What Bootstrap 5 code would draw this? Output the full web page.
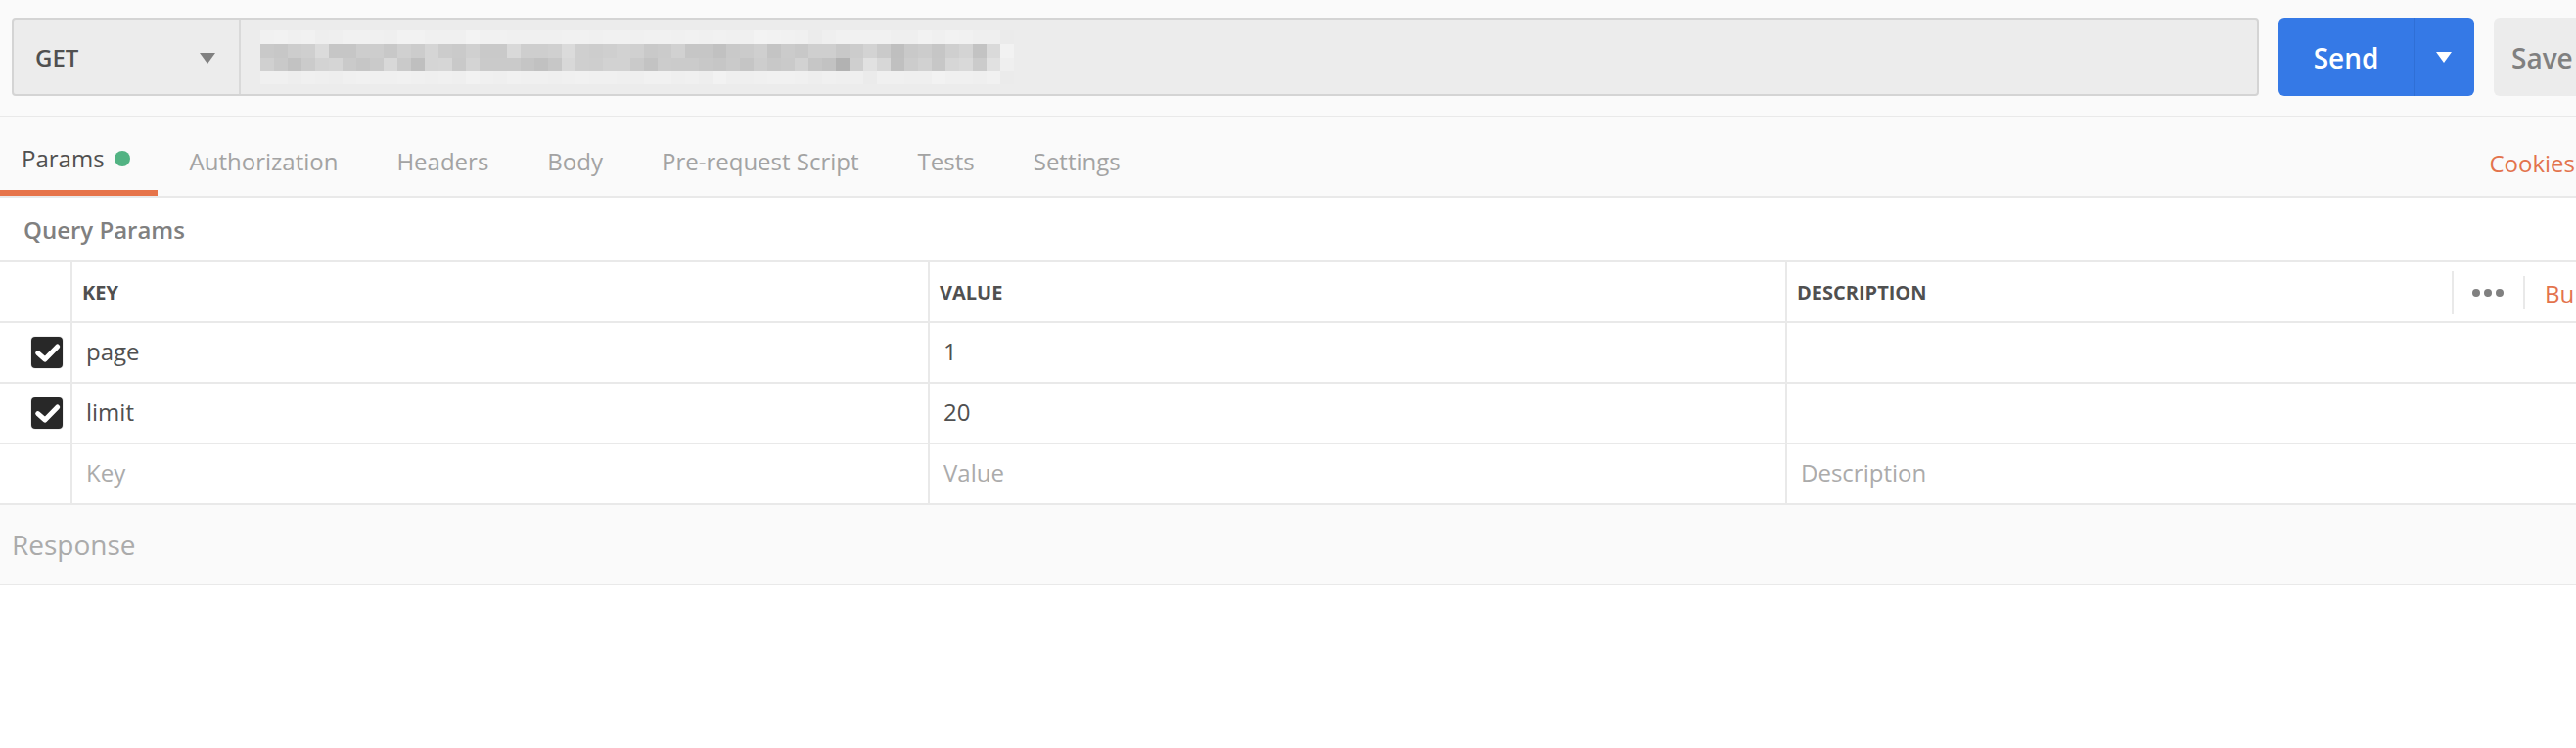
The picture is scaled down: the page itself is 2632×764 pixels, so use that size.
<!DOCTYPE html>
<html lang="en">
<head>
<meta charset="utf-8">
<title>Request</title>
<link href="https://cdn.jsdelivr.net/npm/bootstrap@5.3.0/dist/css/bootstrap.min.css" rel="stylesheet">
<style>
html,body{background:#fff;overflow:hidden;}
body{font-family:"Open Sans","Liberation Sans",sans-serif;font-size:24px;color:#505050;width:2632px;height:764px;}
.topbar{background:#fafafa;border-bottom:2px solid #e9e9e9;padding:18px 0 20px 12px;gap:20px;height:120px;}
.urlgroup{width:2296px;height:80px;background:#ececec;border:2px solid #d4d4d4;border-radius:4px;flex:none;}
.methodbox{width:232px;border-right:2px solid #d9d9d9;padding:2px 24px 0 22px;font-weight:600;font-size:24px;color:#505050;}
.caret-d{width:16px;height:11px;flex:none;}
.urlfield{padding-left:20px;}
.sendgroup{width:200px;height:80px;background:#3579e6;border-radius:6px;flex:none;color:#fff;}
.sendmain{width:140px;border-right:2px solid #2f6fd6;font-size:28px;font-weight:600;padding-top:2px;}
.sendarrow{width:60px;padding-right:2px;}
.savebtn{width:130px;height:80px;background:#ececec;border-radius:6px;flex:none;color:#808080;font-size:28px;font-weight:600;padding:2px 0 0 18px;}
.tabrow{background:#fafafa;height:82px;border-bottom:2px solid #e9e9e9;}
.tabitem{height:80px;padding:10px 30px 0;color:#a3a3a3;font-size:24px;line-height:1;flex:none;}
.tabitem.sel{color:#505050;padding:10px 28px 0 22px;margin-right:3px;border-bottom:6px solid #e6744a;}
.stat-dot{width:16px;height:16px;border-radius:50%;background:#52b383;margin-left:10px;}
.cookieslink{color:#e3734c;font-size:24px;padding-right:1px;padding-top:14px;}
.qptitle{height:64px;padding:1px 0 0 24px;font-size:24px;font-weight:600;color:#808080;}
.paramgrid{width:100%;table-layout:fixed;border-collapse:separate;border-spacing:0;border-top:2px solid #e9e9e9;}
.paramgrid td,.paramgrid th{height:62px;border-bottom:2px solid #e9e9e9;border-right:2px solid #e9e9e9;padding:0 14px 3px;font-size:24px;font-weight:400;color:#505050;vertical-align:middle;white-space:nowrap;overflow:hidden;}
.paramgrid th{font-size:20px;font-weight:700;padding:2px 0 0 10px;color:#505050;}
.paramgrid td:last-child,.paramgrid th:last-child{border-right:0;}
.paramgrid td.chkcell{padding:0 8px 0 0;}
.ghost{color:#ababab!important;}
.chkbox{display:block;width:32px;height:32px;margin-left:auto;background:#282828;border-radius:4px;box-shadow:0 0 0 1px #efefef;}
.chkbox svg{display:block;}
.desc-title{width:669px;flex:none;}
.vsep-a{width:2px;height:44px;background:#e9e9e9;flex:none;}
.vsep-b{width:2px;height:34px;background:#e9e9e9;flex:none;margin-left:20px;}
.moredots{gap:4px;margin-left:19px;flex:none;}
.moredots i{display:block;width:8px;height:8px;border-radius:50%;background:#808080;}
.bulklink{color:#e3734c;font-size:24px;font-weight:400;margin-left:20px;padding-top:2px;flex:none;}
.respbar{height:82px;background:#fafafa;border-bottom:2px solid #e9e9e9;padding-left:12px;font-size:28px;color:#ababab;}
</style>
</head>
<body>
<div class="topbar d-flex align-items-start">
  <div class="urlgroup d-flex">
    <div class="methodbox d-flex align-items-center justify-content-between">
      <span>GET</span>
      <svg class="caret-d" viewBox="0 0 16 11"><path d="M0 0H16L8 11Z" fill="#808080"/></svg>
    </div>
    <div class="urlfield d-flex align-items-center"><svg id="mosaic" width="770" height="55" viewBox="0 0 770 55" shape-rendering="crispEdges"></svg></div>
  </div>
  <div class="sendgroup d-flex">
    <div class="sendmain d-flex align-items-center justify-content-center">Send</div>
    <div class="sendarrow d-flex align-items-center justify-content-center"><svg class="caret-d" viewBox="0 0 16 11"><path d="M0 0H16L8 11Z" fill="#fff"/></svg></div>
  </div>
  <div class="savebtn d-flex align-items-center">Save</div>
</div>

<div class="tabrow d-flex">
  <div class="tabitem sel d-flex align-items-center">Params<span class="stat-dot"></span></div>
  <div class="tabitem d-flex align-items-center">Authorization</div>
  <div class="tabitem d-flex align-items-center">Headers</div>
  <div class="tabitem d-flex align-items-center">Body</div>
  <div class="tabitem d-flex align-items-center">Pre-request Script</div>
  <div class="tabitem d-flex align-items-center">Tests</div>
  <div class="tabitem d-flex align-items-center">Settings</div>
  <div class="cookieslink ms-auto d-flex align-items-center">Cookies</div>
</div>

<div class="qptitle d-flex align-items-center">Query Params</div>

<table class="paramgrid">
  <colgroup><col style="width:74px"><col style="width:876px"><col style="width:876px"><col></colgroup>
  <tr>
    <th></th><th>KEY</th><th>VALUE</th>
    <th><div class="d-flex align-items-center"><span class="desc-title">DESCRIPTION</span><span class="vsep-a"></span><span class="moredots d-flex"><i></i><i></i><i></i></span><span class="vsep-b"></span><span class="bulklink">Bu</span></div></th>
  </tr>
  <tr>
    <td class="chkcell"><span class="chkbox"><svg width="32" height="32" viewBox="0 0 32 32"><path d="M6.7 16.7 14 23 26.7 10" fill="none" stroke="#fff" stroke-width="5" stroke-linecap="round" stroke-linejoin="round"/></svg></span></td>
    <td>page</td><td>1</td><td></td>
  </tr>
  <tr>
    <td class="chkcell"><span class="chkbox"><svg width="32" height="32" viewBox="0 0 32 32"><path d="M6.7 16.7 14 23 26.7 10" fill="none" stroke="#fff" stroke-width="5" stroke-linecap="round" stroke-linejoin="round"/></svg></span></td>
    <td>limit</td><td>20</td><td></td>
  </tr>
  <tr>
    <td></td><td class="ghost">Key</td><td class="ghost">Value</td><td class="ghost">Description</td>
  </tr>
</table>

<div class="respbar d-flex align-items-center">Response</div>

<script>
var rows=[
"f1 f2 f0 f1 ee ef f1 f1 f0 ef f2 f2 f0 f0 f0 f3 f1 f1 f0 f0 f0 f0 f1 f1 f0 f1 f1 f0 f1 f1 f0 f1 f0 f1 f0 f0 f3 f2 f1 f0 ec ef f1 f1 f1 f1 ef ef f2 f0 f2 f1 ef ef eb",
"c9 c7 cd cf db c6 c6 cd cd c8 d0 cc d5 cc ca d0 c9 c9 d9 ce ce d0 db cf cd cf d2 d0 c9 cb d1 c6 c6 c1 c9 cb cf c4 cb c8 cf cf c8 cc d3 ca bf c9 cc c6 cf d4 c3 da f2",
"d0 c9 c2 cb d3 d5 ca c6 ca d8 ca bf d5 d6 c9 d4 ca ca ca c5 c1 c7 d8 cf ce d2 d2 ca c3 cc cb cb c8 c6 ca c5 cd c8 ca d2 c6 c2 b2 cf e1 d7 c0 cc d1 c7 d6 d9 cb e1 ef",
"f0 f0 ee f0 ef ee f0 f1 f0 f0 f1 f0 ef f0 ef f2 f0 ef f1 f0 f0 ef f0 f1 f0 f0 ef ef f1 f1 ef f0 ee f2 ef ef f0 f1 f1 f0 ee f0 ef ef eb f0 f0 ef ef f2 f0 f0 ef f1 eb"
];
var out="";
rows.forEach(function(r,y){
  var h=y===3?13:14;
  r.split(" ").forEach(function(v,x){
    out+='<rect x="'+(x*14)+'" y="'+(y*14)+'" width="14" height="'+h+'" fill="#'+v+v+v+'"/>';
  });
});
document.getElementById("mosaic").innerHTML=out;
</script>
<script src="https://cdn.jsdelivr.net/npm/bootstrap@5.3.0/dist/js/bootstrap.bundle.min.js"></script>
</body>
</html>
